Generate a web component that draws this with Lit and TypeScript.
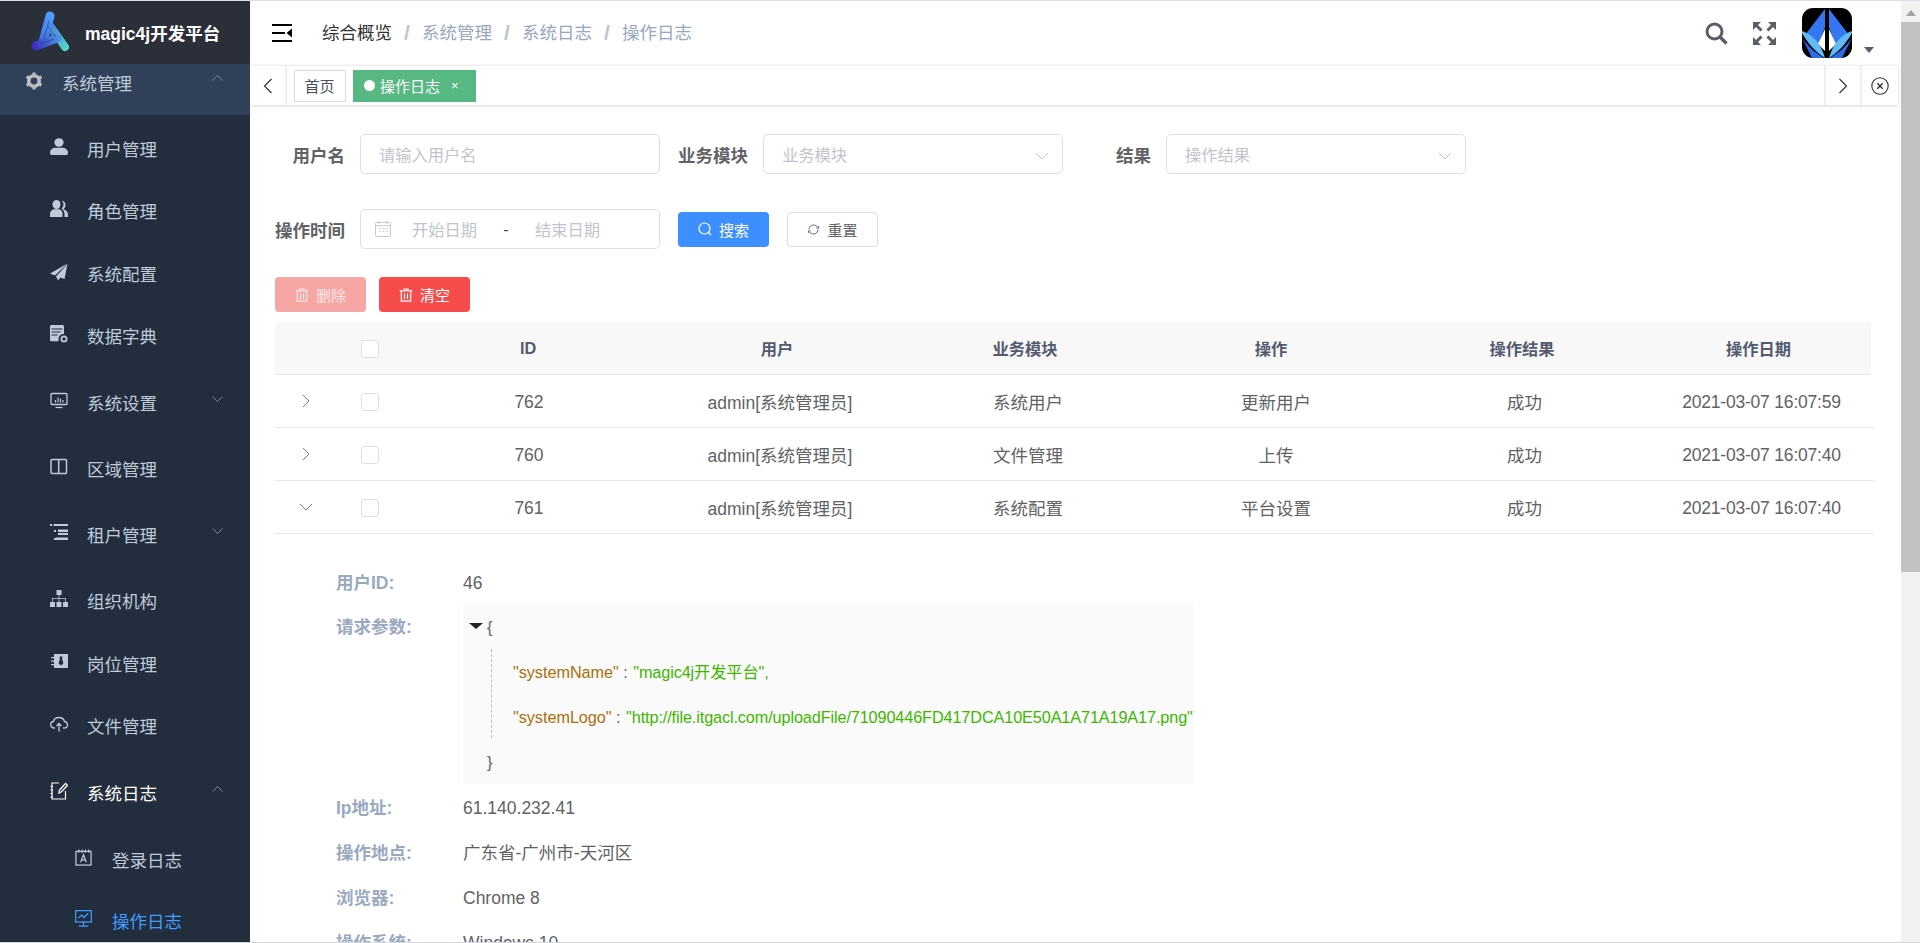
import { LitElement, html, css } from "lit";
import { customElement } from "lit/decorators.js";

const icons: Record<string, unknown> = {
  gear: html`<svg viewBox="0 0 18 18"><circle cx="9" cy="9" r="5.2" fill="none" stroke="currentColor" stroke-width="3.6"/><g stroke="currentColor" stroke-width="3.2"><path d="M9 0.5V3"/><path d="M9 15V17.5"/><path d="M1.6 4.7L3.8 6"/><path d="M14.2 12L16.4 13.3"/><path d="M1.6 13.3L3.8 12"/><path d="M14.2 6L16.4 4.7"/></g></svg>`,
  user: html`<svg viewBox="0 0 18 18" fill="currentColor"><ellipse cx="9" cy="4.5" rx="4.6" ry="4.2"/><path d="M0 15c0-3.6 3-5.2 5.5-5.2h7c2.500 0 5.500 1.600 5.500 5.200 0 1.500-1 2-2 2H2c-1 0-2-.5-2-2z"/></svg>`,
  role: html`<svg viewBox="0 0 18 18" fill="currentColor"><ellipse cx="6.500" cy="4.500" rx="4" ry="4.500"/><path d="M0 17v-3c0-3 2.500-4.800 4.500-4.800h4c2 0 4 2 4 4.800v3z"/><path d="M11.500.8c2.500 0 4 2 4 4.200 0 2-1 3.400-2.200 4 2.500 1 4.700 2.700 4.700 5.500V17h-3.500v-3c0-2.500-1.500-4.500-3-5.500 1.200-1 2-2.300 2-4 0-1.500-.7-2.700-2-3.700z"/></svg>`,
  plane: html`<svg viewBox="0 0 18 18" fill="currentColor"><path d="M17.500.5L0 10.500l5 2L17.500.5z"/><path d="M6 13.500l2 4 2.500-3 4 1.500L17.500 1 6 13.500z"/></svg>`,
  dict: html`<svg viewBox="0 0 18 18" fill="currentColor"><path d="M0 1.500C0 .7.700 0 1.500 0h11c.8 0 1.500.7 1.500 1.500V9c-3-.5-5.500 2-5.500 5.500 0 .7 0 1.200.300 1.800H1.500C.7 16.300 0 15.700 0 15V1.500z"/><g stroke="#222d3e" stroke-width="1"><path d="M1.500 4h11"/><path d="M1.500 7h9"/><path d="M1.500 10h6"/></g><circle cx="14" cy="14" r="2.600" fill="none" stroke="currentColor" stroke-width="1.800"/></svg>`,
  monitor: html`<svg viewBox="0 0 18 18" fill="none" stroke="currentColor"><rect x="1" y="1.500" width="16" height="11" rx="1" stroke-width="1.300"/><path d="M5.500 15.500h7" stroke-width="1.300"/><path d="M5.500 10.500V8M8 10.500V5.500M10.500 10.500V6.500M13 10.500V8" stroke-width="1.200"/></svg>`,
  book: html`<svg viewBox="0 0 18 18" fill="none" stroke="currentColor" stroke-width="1.500"><rect x="1" y="1.500" width="15.500" height="14" rx="1"/><path d="M8.700 1.500v14"/></svg>`,
  list: html`<svg viewBox="0 0 18 18" fill="currentColor"><rect x="0" y="0" width="2" height="2"/><rect x="3.500" y="0" width="14.500" height="2"/><rect x="4" y="6" width="2" height="2"/><rect x="8" y="5.500" width="10" height="2.500"/><rect x="8" y="9" width="10" height="2"/><rect x="4" y="14" width="2" height="2"/><rect x="6" y="13.500" width="12" height="2.500"/></svg>`,
  org: html`<svg viewBox="0 0 18 18" fill="currentColor"><rect x="6.500" y="0" width="5" height="5"/><rect x="0" y="12" width="5" height="5"/><rect x="6.500" y="12" width="5" height="5"/><rect x="13" y="12" width="5" height="5"/><path d="M8.600 5h.8v3H16v4h-.8V8.800H9.400V12h-.8V8.800H2.800V12H2V8h6.600z"/></svg>`,
  post: html`<svg viewBox="0 0 18 18" fill="currentColor"><path d="M4 1h14v14H4z"/><path d="M1 4h3v1.200H1zM1 7.500h3v1.200H1zM1 11h3v1.200H1z"/><path d="M9.500 3.500h3l-.4 2 1.300 5-2.400 2-2.400-2 1.300-5z" fill="#222d3e"/></svg>`,
  cloud: html`<svg viewBox="0 0 18 18" fill="none" stroke="currentColor" stroke-width="1.300"><path d="M5 13H4c-2 0-3.300-1.500-3.300-3.300C.7 8 2 6.600 3.500 6.500 4 4 6.300 2.500 9 2.500c2.800 0 5 2 5.500 4 1.800.2 3 1.500 3 3.200C17.500 11.500 16 13 14 13h-1"/><path d="M9 16.500V8.500M6.500 11L9 8.500l2.500 2.500"/></svg>`,
  note: html`<svg viewBox="0 0 18 18" fill="none" stroke="currentColor" stroke-width="1.200"><path d="M9 1H2v16h13.500V9"/><path d="M.5 4.500h2.500M.5 8h2.500M.5 11.500h2.500M.5 15h2.500"/><path d="M9 11l.5-3 6-6.500 2 1.800-6 6.500z" stroke-width="1.300"/></svg>`,
  login: html`<svg viewBox="0 0 18 18" fill="none" stroke="currentColor" stroke-width="1.300"><rect x="1" y="2.500" width="16" height="14.500"/><path d="M4 .5v3.500M7.500.5v3.500M11 .5v3.500M14.500.5v3.500"/><path d="M6 14l3-8 3 8M7 11.500h4"/></svg>`,
  chart: html`<svg viewBox="0 0 18 18" fill="none" stroke="currentColor" stroke-width="1.300"><rect x=".7" y=".7" width="16.600" height="12"/><path d="M9 12.700v4M4 17h10"/><path d="M3.500 8.500L7 5.500l2.500 2.500L14 3.500"/></svg>`,
};

const trash = html`<svg class="btn-ico" viewBox="0 0 14 14" fill="none" stroke="currentColor" stroke-width="1.200"><path d="M.8 2.800h12.400"/><path d="M5 2.500V1h4v1.500"/><path d="M2.300 3v10.200h9.400V3"/><path d="M5.500 5.500v5.500M8.500 5.500v5.500"/></svg>`;
const chevronDown = html`<svg class="sel-arrow" viewBox="0 0 14 8" fill="none" stroke="#c0c4cc" stroke-width="1"><path d="M1 1l6 6 6-6"/></svg>`;

const menu = [
  { t: "用户管理", i: "user", h: 62 },
  { t: "角色管理", i: "role", h: 63 },
  { t: "系统配置", i: "plane", h: 62 },
  { t: "数据字典", i: "dict", h: 67 },
  { t: "系统设置", i: "monitor", h: 66, arrow: "down" },
  { t: "区域管理", i: "book", h: 66 },
  { t: "租户管理", i: "list", h: 66, arrow: "down" },
  { t: "组织机构", i: "org", h: 63 },
  { t: "岗位管理", i: "post", h: 62 },
  { t: "文件管理", i: "cloud", h: 67 },
  { t: "系统日志", i: "note", h: 67, arrow: "up", bright: true },
  { t: "登录日志", i: "login", h: 61, sub: true },
  { t: "操作日志", i: "chart", h: 62, sub: true, active: true },
];

const rows = [
  { id: "762", mod: "系统用户", op: "更新用户", date: "2021-03-07 16:07:59" },
  { id: "760", mod: "文件管理", op: "上传", date: "2021-03-07 16:07:40" },
  { id: "761", mod: "系统配置", op: "平台设置", date: "2021-03-07 16:07:40", open: true },
];

@customElement("app-root")
export class AppRoot extends LitElement {
  static styles = css`
    :host { display: block; width: 1920px; height: 943px; overflow: hidden; background: #fff; font-family: "Liberation Sans", "Noto Sans CJK SC", sans-serif; color: #606266; }
    * { box-sizing: border-box; }
    svg { display: block; }
    .topline { height: 1px; background: #dcdfe6; }
    .bottomline { height: 1px; background: #d4d7dc; }
    .shell { display: flex; height: 941px; overflow: hidden; }
    .side { width: 250px; flex: none; background: #222d3e; overflow: hidden; color: #bfcbd9; }
    .brand { height: 63px; background: #2b2f3a; display: flex; align-items: center; padding-left: 30px; }
    .brand svg { width: 42px; height: 44px; flex: none; }
    .brand b { margin-left: 13px; color: #fff; font-size: 17.500px; font-weight: 700; white-space: nowrap; }
    .mi { display: flex; align-items: flex-start; padding: 23px 0 0 50px; font-size: 17.500px; line-height: 24px; position: relative; }
    .mi .ic { width: 18px; height: 18px; margin: 0 19px 0 0; flex: none; }
    .mi.first { height: 51px; background: #304058; padding: 8px 0 0 25px; }
    .mi.sub { padding-left: 75px; }
    .mi.sub .ic { width: 17px; height: 17px; margin-right: 20px; }
    .mi.bright { color: #fff; }
    .mi.active { color: #409eff; }
    .mi .arrow { position: absolute; left: 212px; top: 27px; width: 11px; height: 6px; color: #7d8794; }
    .mi.first .arrow { top: 11px; }
    .main { width: 1651px; flex: none; overflow: hidden; }
    .nav { height: 64px; display: flex; align-items: center; }
    .ham { width: 20px; height: 18px; margin: 0 30px 0 22px; flex: none; }
    .crumb { display: flex; font-size: 17.500px; color: #97a8be; line-height: 24px; margin-top: -1px; }
    .crumb span:first-child { color: #303133; }
    .crumb i { width: 30px; text-align: center; font-style: normal; font-weight: 700; font-size: 21px; color: #c0c4cc; }
    .nav-right { margin-left: auto; display: flex; align-items: center; }
    .nav-right .search { width: 23px; height: 23px; margin-right: 25px; }
    .nav-right .full { width: 23px; height: 23px; margin-right: 26px; }
    .avatar { width: 50px; height: 50px; }
    .caret { width: 0; height: 0; border: 5px solid transparent; border-top: 6px solid #5a5e66; border-bottom: 0; margin: 33px 27px 0 12px; }
    .tags { height: 40px; width: 1648px; display: flex; align-items: center; background: #fff; border-top: 1px solid #f0f0f0; box-shadow: 0 1px 3px rgba(0, 21, 41, .18); }
    .tagcell { height: 39px; display: flex; align-items: center; justify-content: center; flex: none; border-right: 2px solid #f0f0f0; }
    .tagcell svg { width: 10px; height: 16px; }
    .tagcell.next { border-left: 2px solid #f0f0f0; }
    .tagcell.end { border-right: 0; }
    .tagcell.end svg { width: 18px; height: 18px; }
    .tag { height: 32px; display: flex; align-items: center; font-size: 15px; flex: none; }
    .tag.home { width: 52px; justify-content: center; border: 1px solid #d8dce5; margin-left: 7px; padding-right: 1px; color: #495060; }
    .tag.on { width: 123px; margin-left: 7px; background: #57b883; color: #fff; padding-left: 11px; }
    .tag.on em { width: 11px; height: 11px; border-radius: 50%; background: #fff; margin-right: 5px; }
    .tag.on u { text-decoration: none; margin-left: 11px; font-size: 13px; line-height: 13px; }
    .tag-fill { flex: 1; height: 39px; }
    .content { padding: 29px 0 0 25px; width: 1651px; }
    .form { display: flex; align-items: center; height: 40px; }
    .form + .form { margin-top: 35px; }
    .lab { width: 70px; text-align: right; margin-right: 15px; font-size: 17.500px; font-weight: 700; flex: none; color: #606266; white-space: nowrap; }
    .inp { width: 300px; height: 40px; border: 1px solid #dcdfe6; border-radius: 5px; display: flex; align-items: center; padding-left: 18px; font-size: 16.250px; color: #c0c4cc; position: relative; flex: none; margin-right: 18px; }
    .sel-arrow { position: absolute; right: 13px; top: 17px; width: 14px; height: 8px; }
    .date { padding-left: 14px; }
    .date svg { width: 16px; height: 16px; margin-right: 21px; }
    .date i { font-style: normal; color: #303133; width: 60px; text-align: center; font-size: 15px; margin: 0 -1px; }
    .btn { height: 35px; width: 91px; border-radius: 4px; display: inline-flex; align-items: center; justify-content: center; gap: 7px; font-size: 15px; flex: none; border: 1px solid transparent; color: #fff; }
    .btn svg { width: 14px; height: 14px; }
    .btn.primary { background: #3d8fff; margin-right: 18px; }
    .btn.plain { background: #fff; border-color: #dcdfe6; color: #606266; }
    .btn.plain svg { width: 13px; height: 13px; }
    .btn.danger { background: #f64c4c; }
    .btn.disabled { background: #f7a6a6; color: #fde7e7; margin-right: 13px; }
    .actions { display: flex; margin-top: 28px; }
    .thead { margin-top: 10px; width: 1596px; height: 53px; display: grid; grid-template-columns: 62px 65px 252px 246px 250px 242px 260px 219px; align-items: center; background: #f8f8f9; border-bottom: 1px solid #e4e7ed; text-align: center; font-size: 16.250px; font-weight: 700; color: #515a6e; }
    .thead div:last-child { padding-right: 6px; }
    .thead .cb { margin-top: 1px; }
    .tr { width: 1599px; height: 53px; display: grid; grid-template-columns: 62px 65px 254px 248px 248px 248px 249px 225px; align-items: center; border-bottom: 1px solid #e4e7ed; text-align: center; font-size: 17.500px; color: #606266; }
    .tr .num { padding-top: 2px; }
    .tr .stamp { padding-top: 2px; letter-spacing: -.2px; white-space: nowrap; }
    .tr .cb { margin-top: 2px; }
    .cb { width: 18px; height: 18px; border: 1px solid #dcdfe6; border-radius: 3px; background: #fff; margin-left: 24px; }
    .exp { width: 10px; height: 14px; margin-left: 26px; color: #7a7f88; }
    .exp.down { width: 14px; height: 10px; margin-left: 24px; }
    .detail { padding: 26px 0 0 61px; }
    .dr { display: flex; height: 45px; align-items: center; font-size: 17.500px; line-height: 24px; }
    .dl { width: 127px; font-weight: 700; color: #99a9bf; flex: none; white-space: nowrap; }
    .dr.tall { height: 180px; align-items: flex-start; }
    .dr.tall .dl { margin-top: 10px; }
    .json { position: relative; width: 731px; height: 180px; margin-top: -1px; background: #fafafa; font-size: 16.250px; color: #606266; white-space: nowrap; overflow: hidden; }
    .jl { height: 45px; display: flex; align-items: center; padding-left: 50px; }
    .jl.brace { padding-left: 24px; }
    .jkey { color: #a96f0a; letter-spacing: -.05px; }
    .jstr { color: #3fb600; letter-spacing: -.12px; margin-left: 1px; }
    .jtri { position: absolute; left: 6px; top: 19px; width: 0; height: 0; border: 7px solid transparent; border-top: 6px solid #222; border-bottom: 0; }
    .jline { position: absolute; left: 28px; top: 45px; height: 89px; border-left: 1px dashed #bbb; }
    .vbar { width: 19px; flex: none; background: #f1f1f1; position: relative; }
    .vbar em { position: absolute; left: 5px; top: 9px; width: 0; height: 0; border: 5px solid transparent; border-bottom: 6px solid #a3a3a3; border-top: 0; }
    .vbar i { position: absolute; left: 0; top: 21px; width: 19px; height: 550px; background: #c1c1c1; }
  `;

  render() {
    return html`
      <div class="topline"></div>
      <div class="shell">
        <aside class="side">
          <div class="brand">
            <svg viewBox="0 0 42 44" fill="none">
              <defs>
                <linearGradient id="g1" gradientUnits="userSpaceOnUse" x1="20" y1="3" x2="12" y2="34"><stop offset="0" stop-color="#4f9dff"/><stop offset="1" stop-color="#3c6fe0"/></linearGradient>
                <linearGradient id="g2" gradientUnits="userSpaceOnUse" x1="4" y1="36" x2="28" y2="28"><stop offset="0" stop-color="#3a2cc0"/><stop offset="1" stop-color="#4a8fe8"/></linearGradient>
                <linearGradient id="g3" gradientUnits="userSpaceOnUse" x1="20" y1="16" x2="37" y2="38"><stop offset="0" stop-color="#4a86e0"/><stop offset="1" stop-color="#4fd8c8"/></linearGradient>
              </defs>
              <path d="M21 16L35 36" stroke="url(#g3)" stroke-width="8" stroke-linecap="round"/>
              <path d="M20 5L13 31" stroke="url(#g1)" stroke-width="9" stroke-linecap="round"/>
              <path d="M6 35L27 27" stroke="url(#g2)" stroke-width="9" stroke-linecap="round"/>
              <path d="M19 10L14 27M18 15L26 26M11 33L24 28" stroke="#2b2f3a" stroke-opacity=".55" stroke-width="1"/>
            </svg>
            <b>magic4j开发平台</b>
          </div>
          <div class="mi first">
            <span class="ic" style="color:#bdbdbd">${icons.gear}</span><span>系统管理</span>
            <svg class="arrow" viewBox="0 0 11 6" fill="none" stroke="currentColor"><path d="M.5 5.500L5.500 .5l5 5"/></svg>
          </div>
          ${menu.map(
            (m) => html`
              <div class="mi ${m.sub ? "sub" : ""} ${m.bright ? "bright" : ""} ${m.active ? "active" : ""}" style="height:${m.h}px">
                <span class="ic">${icons[m.i]}</span><span>${m.t}</span>
                ${m.arrow === "down"
                  ? html`<svg class="arrow" viewBox="0 0 11 6" fill="none" stroke="currentColor"><path d="M.5 .5l5 5 5-5"/></svg>`
                  : m.arrow === "up"
                  ? html`<svg class="arrow" viewBox="0 0 11 6" fill="none" stroke="currentColor"><path d="M.5 5.500L5.500 .5l5 5"/></svg>`
                  : ""}
              </div>
            `
          )}
        </aside>
        <main class="main">
          <header class="nav">
            <svg class="ham" viewBox="0 0 20 18"><g fill="#000"><rect x="0" y="0" width="20" height="2"/><rect x="0" y="8" width="13" height="2"/><rect x="0" y="16" width="20" height="2"/><path d="M20 4.500v9L14.500 9z"/></g></svg>
            <div class="crumb"><span>综合概览</span><i>/</i><span>系统管理</span><i>/</i><span>系统日志</span><i>/</i><span>操作日志</span></div>
            <div class="nav-right">
              <svg class="search" viewBox="0 0 23 23" fill="none" stroke="#5a5e66"><circle cx="9.500" cy="9.500" r="7.500" stroke-width="3"/><path d="M15 15l6.500 6.500" stroke-width="3.400"/></svg>
              <svg class="full" viewBox="0 0 23 23" fill="#5a5e66" stroke="none"><path d="M0 0h8L0 8z"/><path d="M23 0h-8l8 8z"/><path d="M0 23h8l-8-8z"/><path d="M23 23h-8l8-8z"/><g stroke="#5a5e66" stroke-width="3"><path d="M3 3l5.500 5.500"/><path d="M20 3l-5.500 5.500"/><path d="M3 20l5.500-5.500"/><path d="M20 20l-5.500-5.500"/></g></svg>
              <svg class="avatar" viewBox="0 0 50 50">
                <defs><clipPath id="av"><rect width="50" height="50" rx="11"/></clipPath>
                <g id="avh"><path d="M23 1L3 27l12 14 8-22z" fill="#3577f3"/><path d="M23 21l-7 15 7 7z" fill="#fff"/><path d="M0 30l10 20h4L22 50C12 44 5 37 0 30z" fill="#2c6de6"/><path d="M0 23c10 3 19 12 23 27C13 44 5 34 0 25z" fill="#62baf6"/></g></defs>
                <g clip-path="url(#av)"><rect width="50" height="50" fill="#000"/><use href="#avh"/><use href="#avh" transform="translate(50 0) scale(-1 1)"/></g>
              </svg>
              <span class="caret"></span>
            </div>
          </header>
          <div class="tags">
            <div class="tagcell" style="width:37px"><svg viewBox="0 0 10 16" fill="none" stroke="#303133" stroke-width="1.200"><path d="M8.500 1L1.500 8l7 7"/></svg></div>
            <div class="tag home">首页</div>
            <div class="tag on"><em></em>操作日志<u>×</u></div>
            <div class="tag-fill"></div>
            <div class="tagcell next" style="width:38px"><svg viewBox="0 0 10 16" fill="none" stroke="#303133" stroke-width="1.200"><path d="M1.500 1l7 7-7 7"/></svg></div>
            <div class="tagcell end" style="width:36px"><svg viewBox="0 0 18 18" fill="none" stroke="#303133" stroke-width="1.100"><circle cx="9" cy="9" r="8.200"/><path d="M6.300 6.300l5.400 5.400M11.700 6.300l-5.400 5.400" stroke-width="1.400"/></svg></div>
          </div>
          <div class="content">
            <div class="form">
              <span class="lab">用户名</span><div class="inp">请输入用户名</div>
              <span class="lab">业务模块</span><div class="inp">业务模块${chevronDown}</div>
              <span class="lab">结果</span><div class="inp">操作结果${chevronDown}</div>
            </div>
            <div class="form">
              <span class="lab">操作时间</span>
              <div class="inp date">
                <svg viewBox="0 0 17 17" fill="none" stroke="#c0c4cc"><rect x=".5" y="1.500" width="16" height="15" rx="1"/><path d="M.5 5h16M4 0v3M13 0v3M4 8h2M8 8h2M12 8h2M4 11h2M8 11h2M12 11h2"/></svg>
                <span>开始日期</span><i>-</i><span>结束日期</span>
              </div>
              <div class="btn primary"><svg viewBox="0 0 14 14" fill="none" stroke="currentColor" stroke-width="1.200"><circle cx="6.500" cy="6.500" r="5.500"/><path d="M10.500 10.500L13 13"/></svg>搜索</div>
              <div class="btn plain"><svg viewBox="0 0 14 14" fill="none" stroke="currentColor" stroke-width="1"><path d="M2 7a5 5 0 0 1 8.500-3.500L12 5"/><path d="M12.500 3v2.500H10"/><path d="M12 7a5 5 0 0 1-8.500 3.500L2 9"/><path d="M1.500 11V8.500H4"/></svg>重置</div>
            </div>
            <div class="actions">
              <div class="btn disabled">${trash}删除</div>
              <div class="btn danger">${trash}清空</div>
            </div>
            <div class="thead">
              <div></div><div><div class="cb"></div></div><div>ID</div><div>用户</div><div>业务模块</div><div>操作</div><div>操作结果</div><div>操作日期</div>
            </div>
            ${rows.map(
              (r) => html`
                <div class="tr">
                  <div>
                    ${r.open
                      ? html`<svg class="exp down" viewBox="0 0 14 10" fill="none" stroke="currentColor"><path d="M1 2l6 6 6-6"/></svg>`
                      : html`<svg class="exp" viewBox="0 0 10 14" fill="none" stroke="currentColor"><path d="M2 1l6 6-6 6"/></svg>`}
                  </div>
                  <div><div class="cb"></div></div>
                  <div class="num">${r.id}</div><div>admin[系统管理员]</div><div>${r.mod}</div><div>${r.op}</div><div>成功</div><div class="stamp">${r.date}</div>
                </div>
              `
            )}
            <div class="detail">
              <div class="dr"><span class="dl">用户ID:</span><span>46</span></div>
              <div class="dr tall">
                <span class="dl">请求参数:</span>
                <div class="json">
                  <span class="jtri"></span><span class="jline"></span>
                  <div class="jl brace">{</div>
                  <div class="jl"><span class="jkey">"systemName"</span>&nbsp;:&nbsp;<span class="jstr">"magic4j开发平台",</span></div>
                  <div class="jl"><span class="jkey">"systemLogo"</span>&nbsp;:&nbsp;<span class="jstr">"http://file.itgacl.com/uploadFile/71090446FD417DCA10E50A1A71A19A17.png"</span></div>
                  <div class="jl brace">}</div>
                </div>
              </div>
              <div class="dr"><span class="dl">Ip地址:</span><span>61.140.232.41</span></div>
              <div class="dr"><span class="dl">操作地点:</span><span>广东省-广州市-天河区</span></div>
              <div class="dr"><span class="dl">浏览器:</span><span>Chrome 8</span></div>
              <div class="dr"><span class="dl">操作系统:</span><span>Windows 10</span></div>
            </div>
          </div>
        </main>
        <div class="vbar"><em></em><i></i></div>
      </div>
      <div class="bottomline"></div>
    `;
  }
}
